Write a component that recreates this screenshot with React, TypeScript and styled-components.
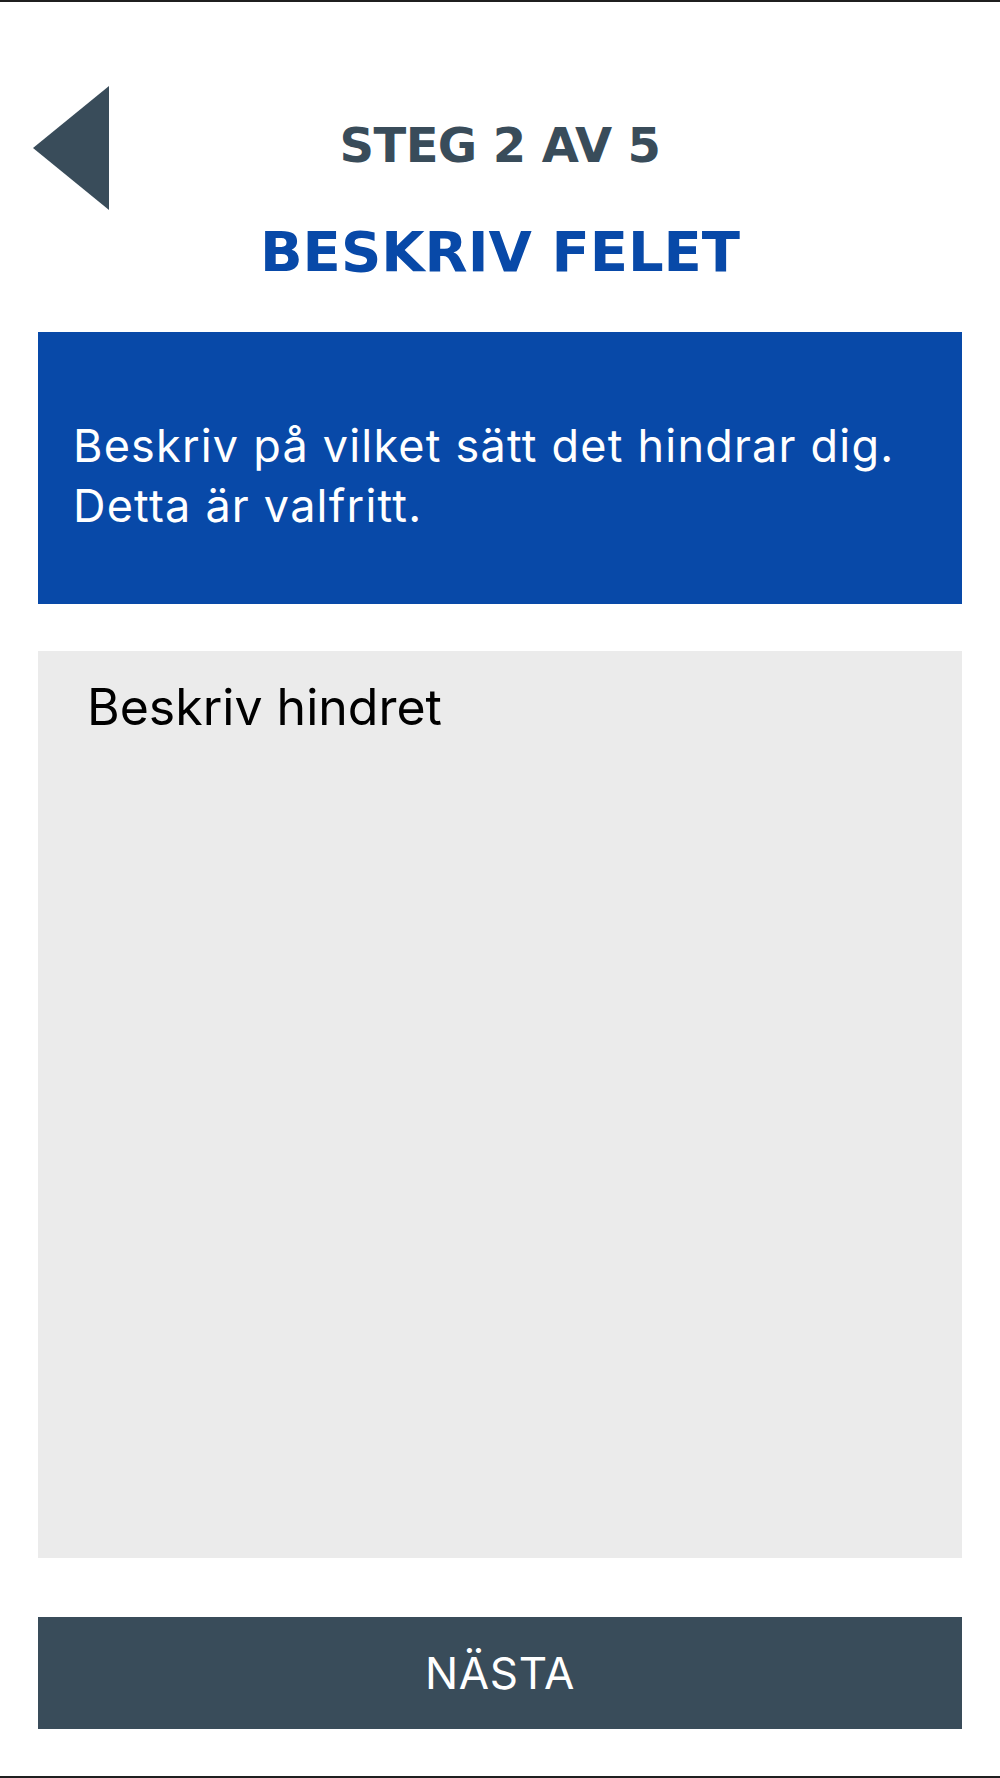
import React from 'react';
import styled, { createGlobalStyle } from 'styled-components';

const GlobalStyle = createGlobalStyle`
  html, body {
    margin: 0;
    padding: 0;
    background: #ffffff;
  }

  * {
    box-sizing: border-box;
  }
`;

const Screen = styled.div`
  width: 1000px;
  min-height: 1778px;
  border-top: 2px solid #1f1f1f;
  border-bottom: 2px solid #1f1f1f;
  background: #ffffff;
  display: flex;
  flex-direction: column;
  font-family: Inter, 'Noto Sans', sans-serif;
`;

const Header = styled.header`
  display: grid;
  grid-template-columns: 1fr auto 1fr;
  padding-top: 84px;
`;

const BackButton = styled.button`
  justify-self: start;
  margin-left: 33px;
  width: 76px;
  height: 124px;
  padding: 0;
  border: none;
  background: transparent;
  cursor: pointer;

  svg {
    display: block;
  }
`;

const Titles = styled.div`
  margin-top: 35px;
  display: flex;
  flex-direction: column;
  align-items: center;
`;

const StepLabel = styled.div`
  font-family: 'DejaVu Sans', sans-serif;
  font-weight: 700;
  font-size: 48px;
  line-height: 48px;
  color: #394c5a;
  letter-spacing: -0.6px;
  white-space: nowrap;
`;

const PageTitle = styled.h1`
  margin: 55px 0 0;
  font-family: 'DejaVu Sans', sans-serif;
  font-weight: 700;
  font-size: 56px;
  line-height: 56px;
  color: #0849a8;
  white-space: nowrap;
`;

const Body = styled.main`
  display: flex;
  flex-direction: column;
  padding: 0 38px;
`;

const InfoBox = styled.div`
  margin-top: 52px;
  height: 272px;
  padding: 84px 35px 0;
  background: #0849a8;
  color: #ffffff;
  font-size: 45px;
  line-height: 60px;
  letter-spacing: 1.2px;
`;

const DescriptionField = styled.textarea`
  margin-top: 47px;
  height: 907px;
  width: 100%;
  padding: 26px 50px 26px 49px;
  border: none;
  outline: none;
  resize: none;
  background: #ebebeb;
  font-family: Inter, 'Noto Sans', sans-serif;
  font-size: 50px;
  line-height: 60px;
  color: #000000;

  &::placeholder {
    color: #000000;
    opacity: 1;
  }
`;

const NextButton = styled.button`
  margin-top: 59px;
  height: 112px;
  width: 100%;
  border: none;
  background: #394c5a;
  color: #ffffff;
  font-family: Inter, 'Noto Sans', sans-serif;
  font-size: 44px;
  letter-spacing: 0.6px;
  cursor: pointer;
`;

const BackArrow = () => (
  <svg width="76" height="124" viewBox="0 0 76 124">
    <polygon points="76,0 76,124 0,62" fill="#394c5a" />
  </svg>
);

const App: React.FC = () => {
  return (
    <>
      <GlobalStyle />
      <Screen>
        <Header>
          <BackButton aria-label="Tillbaka">
            <BackArrow />
          </BackButton>
          <Titles>
            <StepLabel>STEG 2 AV 5</StepLabel>
            <PageTitle>BESKRIV FELET</PageTitle>
          </Titles>
          <div />
        </Header>
        <Body>
          <InfoBox>
            Beskriv på vilket sätt det hindrar dig.
            <br />
            Detta är valfritt.
          </InfoBox>
          <DescriptionField placeholder="Beskriv hindret" />
          <NextButton>NÄSTA</NextButton>
        </Body>
      </Screen>
    </>
  );
};

export default App;
